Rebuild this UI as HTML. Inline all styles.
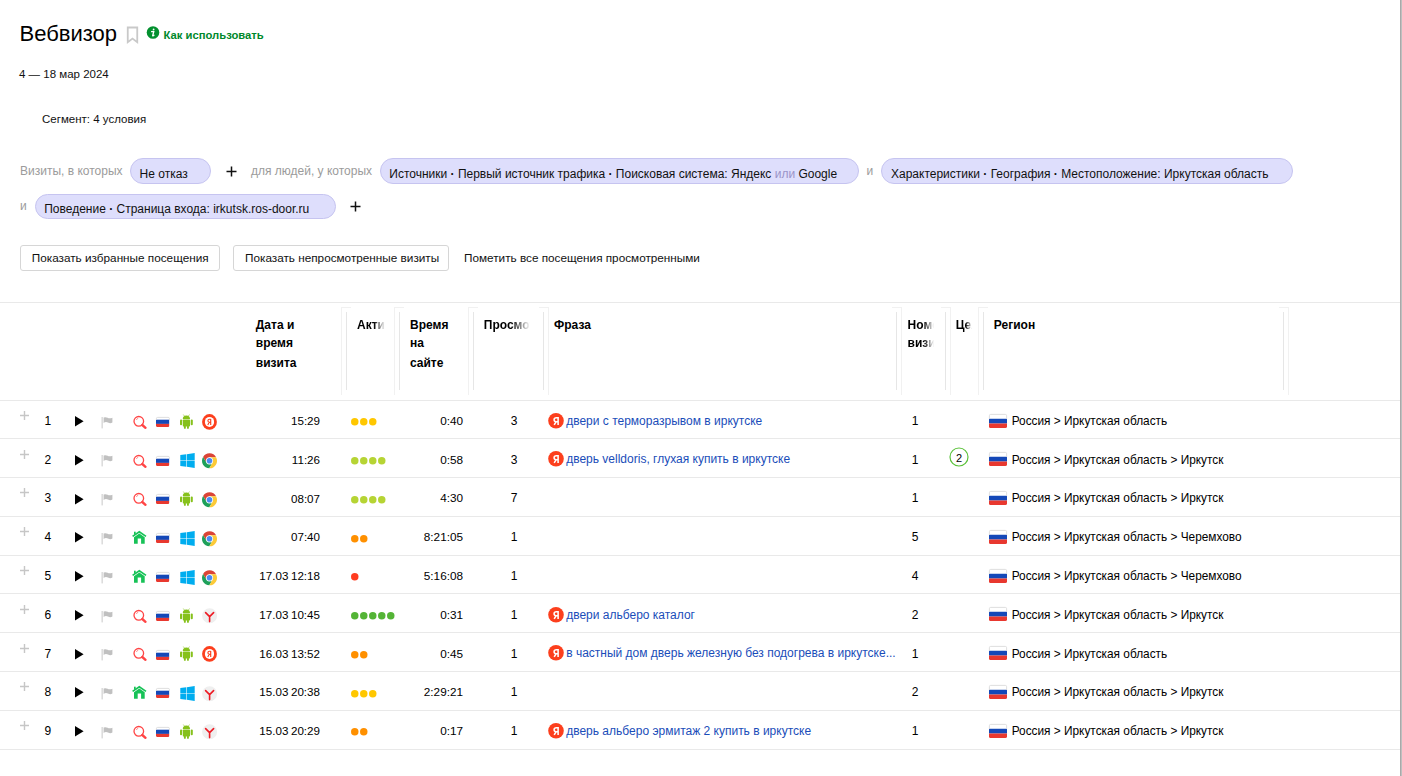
<!DOCTYPE html>
<html><head><meta charset="utf-8"><title>Вебвизор</title><style>
html,body{margin:0;padding:0;background:#fff}
body{width:1402px;height:776px;overflow:hidden;position:relative;font-family:"Liberation Sans",sans-serif}
.t{position:absolute;white-space:nowrap}
.i{position:absolute;overflow:visible}
.pill{position:absolute;box-sizing:border-box;background:#dedefc;border:1px solid #c6c4f0;border-radius:13px}
.btn{position:absolute;box-sizing:border-box;background:#fff;border:1px solid #d6d6d6;border-radius:3px}
.hl{position:absolute;left:0;width:1400px;height:1px;background:#e9e9e9}
.sl{position:absolute;width:1px;background:#f1f1f1}
.st{position:absolute;height:1px;background:#f1f1f1}
.sd{position:absolute;width:1px;background:#e6e6e6}
.bul{font-weight:bold}
</style></head><body>
<div class="t" style="left:19.5px;top:20.88px;font-size:22px;line-height:26px;font-weight:normal;color:#000;">Вебвизор</div>
<svg class="i" style="left:126px;top:26px" width="13" height="18" viewBox="0 0 13 18"><path d="M1.75 1.5H11.25V16.2L6.5 12.6L1.75 16.2Z" fill="none" stroke="#c9c9c9" stroke-width="1.8" stroke-linejoin="miter"/></svg>
<svg class="i" style="left:146px;top:26px" width="14" height="14" viewBox="0 0 14 14"><circle cx="7" cy="6.5" r="6.3" fill="#03902f"/><circle cx="7.6" cy="3.4" r="0.9" fill="#fff"/><path d="M5.6 5.7L7.9 5.3L6.7 9.4Q6.5 10.1 7.2 9.8L8 9.3" fill="none" stroke="#fff" stroke-width="1.3" stroke-linecap="round" stroke-linejoin="round"/></svg>
<div class="t" style="left:163.5px;top:27.80px;font-size:11.25px;line-height:14px;font-weight:bold;color:#00892b;">Как использовать</div>
<div class="t" style="left:19px;top:67.02px;font-size:11.5px;line-height:14px;font-weight:normal;color:#111;">4 — 18 мар 2024</div>
<div class="t" style="left:42px;top:112.02px;font-size:11.5px;line-height:14px;font-weight:normal;color:#111;">Сегмент: 4 условия</div>
<div class="t" style="left:20px;top:164.14px;font-size:12px;line-height:14px;font-weight:normal;color:#9b9b9b;">Визиты, в которых</div>
<div class="pill" style="left:129.6px;top:158.2px;width:81.9px;height:25.400000000000006px"></div><div class="t" style="left:139.6px;top:166.84px;font-size:12px;line-height:14px;font-weight:normal;color:#111;">Не отказ</div>
<svg class="i" style="left:226px;top:166px" width="11" height="11" viewBox="0 0 11 11"><path d="M5.5 0.5V10.5M0.5 5.5H10.5" stroke="#111" stroke-width="1.5"/></svg>
<div class="t" style="left:251px;top:164.14px;font-size:12px;line-height:14px;font-weight:normal;color:#9b9b9b;">для людей, у которых</div>
<div class="pill" style="left:379.5px;top:158.2px;width:479.5px;height:25.400000000000006px"></div><div class="t" style="left:389.3px;top:166.84px;font-size:12px;line-height:14px;font-weight:normal;color:#111;">Источники <b class="bul">·</b> Первый источник трафика <b class="bul">·</b> Поисковая система: Яндекс <span style="color:#9a94c8">или</span> Google</div>
<div class="t" style="left:866.5px;top:164.14px;font-size:12px;line-height:14px;font-weight:normal;color:#9b9b9b;">и</div>
<div class="pill" style="left:881.3px;top:158.2px;width:411.70000000000005px;height:25.400000000000006px"></div><div class="t" style="left:891px;top:166.84px;font-size:12px;line-height:14px;font-weight:normal;color:#111;">Характеристики <b class="bul">·</b> География <b class="bul">·</b> Местоположение: Иркутская область</div>
<div class="t" style="left:20px;top:199.14px;font-size:12px;line-height:14px;font-weight:normal;color:#9b9b9b;">и</div>
<div class="pill" style="left:34.5px;top:193.6px;width:301.7px;height:25.0px"></div><div class="t" style="left:44.2px;top:201.84px;font-size:12px;line-height:14px;font-weight:normal;color:#111;">Поведение <b class="bul">·</b> Страница входа: irkutsk.ros-door.ru</div>
<svg class="i" style="left:349.9px;top:200.9px" width="11" height="11" viewBox="0 0 11 11"><path d="M5.5 0.5V10.5M0.5 5.5H10.5" stroke="#111" stroke-width="1.5"/></svg>
<div class="btn" style="left:20px;top:245px;width:200px;height:26px"></div>
<div class="t" style="left:31.8px;top:250.73px;font-size:11.75px;line-height:14px;font-weight:normal;color:#111;">Показать избранные посещения</div>
<div class="btn" style="left:233px;top:245px;width:216px;height:26px"></div>
<div class="t" style="left:245px;top:250.73px;font-size:11.75px;line-height:14px;font-weight:normal;color:#111;">Показать непросмотренные визиты</div>
<div class="t" style="left:464px;top:250.73px;font-size:11.75px;line-height:14px;font-weight:normal;color:#111;">Пометить все посещения просмотренными</div>
<div class="hl" style="top:302px"></div>
<div class="hl" style="top:400px"></div>
<div class="t" style="left:255.8px;top:317.74px;font-size:12px;line-height:14px;font-weight:bold;color:#000;">Дата и</div><div class="t" style="left:255.8px;top:336.24px;font-size:12px;line-height:14px;font-weight:bold;color:#000;">время</div><div class="t" style="left:255.8px;top:355.64px;font-size:12px;line-height:14px;font-weight:bold;color:#000;">визита</div>
<div class="t" style="left:357px;top:317.74px;font-size:12px;line-height:14px;font-weight:bold;color:#000;width:28px;overflow:hidden;-webkit-mask-image:linear-gradient(90deg,#000 60%,transparent 100%);mask-image:linear-gradient(90deg,#000 60%,transparent 100%)">Активность</div>
<div class="t" style="left:410px;top:317.74px;font-size:12px;line-height:14px;font-weight:bold;color:#000;">Время</div><div class="t" style="left:410px;top:336.24px;font-size:12px;line-height:14px;font-weight:bold;color:#000;">на</div><div class="t" style="left:410px;top:355.64px;font-size:12px;line-height:14px;font-weight:bold;color:#000;">сайте</div>
<div class="t" style="left:483.8px;top:317.74px;font-size:12px;line-height:14px;font-weight:bold;color:#000;width:46px;overflow:hidden;-webkit-mask-image:linear-gradient(90deg,#000 60%,transparent 100%);mask-image:linear-gradient(90deg,#000 60%,transparent 100%)">Просмотры</div>
<div class="t" style="left:554px;top:317.74px;font-size:12px;line-height:14px;font-weight:bold;color:#000;">Фраза</div>
<div class="t" style="left:907.6px;top:317.74px;font-size:12px;line-height:14px;font-weight:bold;color:#000;width:26px;overflow:hidden;-webkit-mask-image:linear-gradient(90deg,#000 60%,transparent 100%);mask-image:linear-gradient(90deg,#000 60%,transparent 100%)">Номер</div><div class="t" style="left:907.6px;top:336.24px;font-size:12px;line-height:14px;font-weight:bold;color:#000;width:26px;overflow:hidden;-webkit-mask-image:linear-gradient(90deg,#000 60%,transparent 100%);mask-image:linear-gradient(90deg,#000 60%,transparent 100%)">визита</div>
<div class="t" style="left:955.7px;top:317.74px;font-size:12px;line-height:14px;font-weight:bold;color:#000;width:16px;overflow:hidden;-webkit-mask-image:linear-gradient(90deg,#000 60%,transparent 100%);mask-image:linear-gradient(90deg,#000 60%,transparent 100%)">Цели</div>
<div class="t" style="left:993.8px;top:317.74px;font-size:12px;line-height:14px;font-weight:bold;color:#000;">Регион</div>
<div class="sl" style="left:341px;top:307px;height:88px"></div><div class="st" style="left:341px;top:307px;width:10px"></div><div class="sd" style="left:346px;top:312px;height:78px"></div>
<div class="sl" style="left:394px;top:307px;height:88px"></div><div class="st" style="left:394px;top:307px;width:10px"></div><div class="sd" style="left:399px;top:312px;height:78px"></div>
<div class="sl" style="left:468px;top:307px;height:88px"></div><div class="st" style="left:468px;top:307px;width:10px"></div><div class="sd" style="left:473px;top:312px;height:78px"></div>
<div class="sl" style="left:978px;top:307px;height:88px"></div><div class="st" style="left:978px;top:307px;width:10px"></div><div class="sd" style="left:983px;top:312px;height:78px"></div>
<div class="sl" style="left:548px;top:307px;height:88px"></div><div class="st" style="left:539px;top:307px;width:10px"></div><div class="sd" style="left:543px;top:312px;height:78px"></div>
<div class="sl" style="left:901px;top:307px;height:88px"></div><div class="st" style="left:892px;top:307px;width:10px"></div><div class="sd" style="left:896px;top:312px;height:78px"></div>
<div class="sl" style="left:950px;top:307px;height:88px"></div><div class="st" style="left:941px;top:307px;width:10px"></div><div class="sd" style="left:945px;top:312px;height:78px"></div>
<div class="sl" style="left:1288px;top:307px;height:88px"></div><div class="st" style="left:1279px;top:307px;width:10px"></div><div class="sd" style="left:1283px;top:312px;height:78px"></div>
<div class="hl" style="top:438px"></div>
<div class="hl" style="top:477px"></div>
<div class="hl" style="top:516px"></div>
<div class="hl" style="top:555px"></div>
<div class="hl" style="top:593px"></div>
<div class="hl" style="top:632px"></div>
<div class="hl" style="top:671px"></div>
<div class="hl" style="top:710px"></div>
<div class="hl" style="top:749px"></div>
<svg class="i" style="left:20.1px;top:410.9px" width="9" height="9" viewBox="0 0 9 9"><path d="M4.5 0V9M0 4.5H9" stroke="#c6c6c6" stroke-width="1.4"/></svg>
<div class="t" style="left:44.5px;top:413.84px;font-size:12px;line-height:14px;font-weight:normal;color:#000;">1</div>
<svg class="i" style="left:75px;top:416.0px" width="9" height="11" viewBox="0 0 9 11"><path d="M0 0L8.6 5.2L0 10.4Z" fill="#000"/></svg>
<svg class="i" style="left:101px;top:416.6px" width="12" height="12" viewBox="0 0 12 12"><rect x="0.4" y="0" width="1.6" height="11.4" fill="#dcdcdc"/><path d="M2.6 0.6Q4.5 -0.3 6.6 0.8T11.4 0.7V5.6Q9.3 6.7 7 5.6T2.6 5.9Z" fill="#c0c0c0"/></svg>
<svg class="i" style="left:133px;top:415.8px" width="15" height="14" viewBox="0 0 15 14"><circle cx="5.8" cy="5.3" r="4.8" fill="none" stroke="#ff4545" stroke-width="1.3"/><path d="M3.3 3.9Q3.9 2.6 5.2 2.3" fill="none" stroke="#ff8080" stroke-width="0.9"/><path d="M9.3 9L12.5 11.8" stroke="#ff4545" stroke-width="2.4" stroke-linecap="round"/></svg>
<svg class="i" style="left:156px;top:416.9px" width="13.8" height="10" viewBox="0 0 13.8 10"><defs><clipPath id="c156416_913"><rect x="0" y="0" width="13.4" height="10" rx="1.6"/></clipPath></defs><g clip-path="url(#c156416_913)"><rect x="0" y="0" width="13.4" height="10" fill="#fff"/><rect x="0" y="2.70" width="13.4" height="4.20" fill="#1448b8"/><rect x="0" y="6.90" width="13.4" height="3.20" fill="#e8382f"/></g><path d="M0.4 3.00V1.6A1.2000000000000002 1.2000000000000002 0 0 1 1.6 0.4H12.200000000000001A1.2000000000000002 1.2000000000000002 0 0 1 13.4 1.6V3.00" fill="none" stroke="#d6d6d6" stroke-width="0.8"/></svg>
<svg class="i" style="left:180px;top:413.8px" width="13" height="15" viewBox="0 0 13 15"><path d="M3.3 0.5L4.5 2.2M9.5 0.5L8.3 2.2" stroke="#a8d45a" stroke-width="0.8"/><path d="M2.8 5A3.6 3.6 0 0 1 10 5Z" fill="#86c11b"/><rect x="2.8" y="5.6" width="7.2" height="6.9" rx="0.7" fill="#86c11b"/><rect x="0" y="5.5" width="2.1" height="5.8" rx="1" fill="#86c11b"/><rect x="10.7" y="5.5" width="2.1" height="5.8" rx="1" fill="#86c11b"/><rect x="3.9" y="11.5" width="1.9" height="3.3" rx="0.9" fill="#86c11b"/><rect x="7" y="11.5" width="1.9" height="3.3" rx="0.9" fill="#86c11b"/></svg>
<svg class="i" style="left:202px;top:413.8px" width="15" height="16" viewBox="0 0 15 16"><ellipse cx="7.5" cy="7.9" rx="7.4" ry="7.8" fill="#fc3f1d"/><ellipse cx="7.5" cy="7.9" rx="4.6" ry="5" fill="#fff"/><path d="M8.7 4.9V10.9M8.7 5.2H7.5Q5.9 5.2 5.9 6.8Q5.9 8.3 7.5 8.3H8.7M7.2 8.3L5.8 10.9" fill="none" stroke="#fc3f1d" stroke-width="1.15"/></svg>
<div class="t" style="right:1082px;top:413.98px;font-size:11.6px;line-height:14px;font-weight:normal;color:#000;word-spacing:-0.6px">15:29</div>
<svg class="i" style="left:351px;top:418.2px" width="46" height="8" viewBox="0 0 46 8"><circle cx="3.75" cy="3.8" r="3.75" fill="#ffc700"/><circle cx="12.75" cy="3.8" r="3.75" fill="#ffc700"/><circle cx="21.75" cy="3.8" r="3.75" fill="#ffc700"/></svg>
<div class="t" style="right:939px;top:413.93px;font-size:11.75px;line-height:14px;font-weight:normal;color:#000;">0:40</div>
<div class="t" style="right:884.5px;top:413.84px;font-size:12px;line-height:14px;font-weight:normal;color:#000;">3</div>
<svg class="i" style="left:548px;top:412.6px" width="16" height="16" viewBox="0 0 16 16"><circle cx="8" cy="7.8" r="7.8" fill="#fc3f1d"/><path d="M10.1 3.9V11.9M10.1 4.7H8.4Q6.1 4.7 6.1 6.8Q6.1 8.8 8.4 8.8H10.1M8 8.8L6.2 11.9" fill="none" stroke="#fff" stroke-width="1.55"/></svg>
<div class="t" style="left:566.2px;top:413.64px;font-size:12px;line-height:14px;font-weight:normal;color:#1a4db9;">двери с терморазрывом в иркутске</div>
<div class="t" style="right:483.5px;top:413.84px;font-size:12px;line-height:14px;font-weight:normal;color:#000;">1</div>
<svg class="i" style="left:989px;top:413.5px" width="18" height="14" viewBox="0 0 18 14"><defs><clipPath id="c989413_518"><rect x="0" y="0" width="18.0" height="14" rx="1.6"/></clipPath></defs><g clip-path="url(#c989413_518)"><rect x="0" y="0" width="18.0" height="14" fill="#fff"/><rect x="0" y="4.76" width="18.0" height="4.76" fill="#1448b8"/><rect x="0" y="9.52" width="18.0" height="4.58" fill="#e8382f"/></g><path d="M0.4 5.06V1.6A1.2000000000000002 1.2000000000000002 0 0 1 1.6 0.4H16.4A1.2000000000000002 1.2000000000000002 0 0 1 17.6 1.6V5.06" fill="none" stroke="#d6d6d6" stroke-width="0.8"/></svg>
<div class="t" style="left:1011.7px;top:413.89px;font-size:11.85px;line-height:14px;font-weight:normal;color:#000;">Россия &gt; Иркутская область</div>
<svg class="i" style="left:20.1px;top:449.68px" width="9" height="9" viewBox="0 0 9 9"><path d="M4.5 0V9M0 4.5H9" stroke="#c6c6c6" stroke-width="1.4"/></svg>
<div class="t" style="left:44.5px;top:452.62px;font-size:12px;line-height:14px;font-weight:normal;color:#000;">2</div>
<svg class="i" style="left:75px;top:454.78px" width="9" height="11" viewBox="0 0 9 11"><path d="M0 0L8.6 5.2L0 10.4Z" fill="#000"/></svg>
<svg class="i" style="left:101px;top:455.38px" width="12" height="12" viewBox="0 0 12 12"><rect x="0.4" y="0" width="1.6" height="11.4" fill="#dcdcdc"/><path d="M2.6 0.6Q4.5 -0.3 6.6 0.8T11.4 0.7V5.6Q9.3 6.7 7 5.6T2.6 5.9Z" fill="#c0c0c0"/></svg>
<svg class="i" style="left:133px;top:454.58px" width="15" height="14" viewBox="0 0 15 14"><circle cx="5.8" cy="5.3" r="4.8" fill="none" stroke="#ff4545" stroke-width="1.3"/><path d="M3.3 3.9Q3.9 2.6 5.2 2.3" fill="none" stroke="#ff8080" stroke-width="0.9"/><path d="M9.3 9L12.5 11.8" stroke="#ff4545" stroke-width="2.4" stroke-linecap="round"/></svg>
<svg class="i" style="left:156px;top:455.68px" width="13.8" height="10" viewBox="0 0 13.8 10"><defs><clipPath id="c156455_6813"><rect x="0" y="0" width="13.4" height="10" rx="1.6"/></clipPath></defs><g clip-path="url(#c156455_6813)"><rect x="0" y="0" width="13.4" height="10" fill="#fff"/><rect x="0" y="2.70" width="13.4" height="4.20" fill="#1448b8"/><rect x="0" y="6.90" width="13.4" height="3.20" fill="#e8382f"/></g><path d="M0.4 3.00V1.6A1.2000000000000002 1.2000000000000002 0 0 1 1.6 0.4H12.200000000000001A1.2000000000000002 1.2000000000000002 0 0 1 13.4 1.6V3.00" fill="none" stroke="#d6d6d6" stroke-width="0.8"/></svg>
<svg class="i" style="left:179.5px;top:453.38px" width="15" height="15" viewBox="0 0 15 15"><path d="M0.3 2.1L6.3 1.3V7.2H0.3Z M6.9 1.2L14.7 0V7.2H6.9Z M0.3 7.8H6.3V13.7L0.3 12.9Z M6.9 7.8H14.7V15L6.9 13.8Z" fill="#00adef"/></svg>
<svg class="i" style="left:202px;top:453.38px" width="15" height="16" viewBox="0 0 15 16"><path d="M7.500 4.200L14.080 4.200A7.5 7.5 0 0 0 1.093 3.902L4.382 9.600L7.5 7.8Z" fill="#db4437"/><path d="M4.382 9.600L1.093 3.902A7.5 7.5 0 0 0 7.328 15.298L10.618 9.600L7.5 7.8Z" fill="#1ea05a"/><path d="M10.618 9.600L7.328 15.298A7.5 7.5 0 0 0 14.080 4.200L7.500 4.200L7.5 7.8Z" fill="#fcca38"/><circle cx="7.5" cy="7.8" r="3.6" fill="#fff"/><circle cx="7.5" cy="7.8" r="2.8" fill="#4a8af4"/></svg>
<div class="t" style="right:1082px;top:452.76px;font-size:11.6px;line-height:14px;font-weight:normal;color:#000;word-spacing:-0.6px">11:26</div>
<svg class="i" style="left:351px;top:456.98px" width="46" height="8" viewBox="0 0 46 8"><circle cx="3.75" cy="3.8" r="3.75" fill="#b6d434"/><circle cx="12.75" cy="3.8" r="3.75" fill="#b6d434"/><circle cx="21.75" cy="3.8" r="3.75" fill="#b6d434"/><circle cx="30.75" cy="3.8" r="3.75" fill="#b6d434"/></svg>
<div class="t" style="right:939px;top:452.71px;font-size:11.75px;line-height:14px;font-weight:normal;color:#000;">0:58</div>
<div class="t" style="right:884.5px;top:452.62px;font-size:12px;line-height:14px;font-weight:normal;color:#000;">3</div>
<svg class="i" style="left:548px;top:451.38px" width="16" height="16" viewBox="0 0 16 16"><circle cx="8" cy="7.8" r="7.8" fill="#fc3f1d"/><path d="M10.1 3.9V11.9M10.1 4.7H8.4Q6.1 4.7 6.1 6.8Q6.1 8.8 8.4 8.8H10.1M8 8.8L6.2 11.9" fill="none" stroke="#fff" stroke-width="1.55"/></svg>
<div class="t" style="left:566.2px;top:452.42px;font-size:12px;line-height:14px;font-weight:normal;color:#1a4db9;">дверь velldoris, глухая купить в иркутске</div>
<div class="t" style="right:483.5px;top:452.62px;font-size:12px;line-height:14px;font-weight:normal;color:#000;">1</div>
<svg class="i" style="left:949.1px;top:446.78px" width="20" height="20" viewBox="0 0 20 20"><circle cx="10" cy="10" r="9" fill="none" stroke="#5bc23a" stroke-width="1.2"/><text x="10" y="15" text-anchor="middle" font-family="Liberation Sans" font-size="11" fill="#000">2</text></svg>
<svg class="i" style="left:989px;top:452.28px" width="18" height="14" viewBox="0 0 18 14"><defs><clipPath id="c989452_2818"><rect x="0" y="0" width="18.0" height="14" rx="1.6"/></clipPath></defs><g clip-path="url(#c989452_2818)"><rect x="0" y="0" width="18.0" height="14" fill="#fff"/><rect x="0" y="4.76" width="18.0" height="4.76" fill="#1448b8"/><rect x="0" y="9.52" width="18.0" height="4.58" fill="#e8382f"/></g><path d="M0.4 5.06V1.6A1.2000000000000002 1.2000000000000002 0 0 1 1.6 0.4H16.4A1.2000000000000002 1.2000000000000002 0 0 1 17.6 1.6V5.06" fill="none" stroke="#d6d6d6" stroke-width="0.8"/></svg>
<div class="t" style="left:1011.7px;top:452.67px;font-size:11.85px;line-height:14px;font-weight:normal;color:#000;">Россия &gt; Иркутская область &gt; Иркутск</div>
<svg class="i" style="left:20.1px;top:488.46px" width="9" height="9" viewBox="0 0 9 9"><path d="M4.5 0V9M0 4.5H9" stroke="#c6c6c6" stroke-width="1.4"/></svg>
<div class="t" style="left:44.5px;top:491.40px;font-size:12px;line-height:14px;font-weight:normal;color:#000;">3</div>
<svg class="i" style="left:75px;top:493.56px" width="9" height="11" viewBox="0 0 9 11"><path d="M0 0L8.6 5.2L0 10.4Z" fill="#000"/></svg>
<svg class="i" style="left:101px;top:494.16px" width="12" height="12" viewBox="0 0 12 12"><rect x="0.4" y="0" width="1.6" height="11.4" fill="#dcdcdc"/><path d="M2.6 0.6Q4.5 -0.3 6.6 0.8T11.4 0.7V5.6Q9.3 6.7 7 5.6T2.6 5.9Z" fill="#c0c0c0"/></svg>
<svg class="i" style="left:133px;top:493.36px" width="15" height="14" viewBox="0 0 15 14"><circle cx="5.8" cy="5.3" r="4.8" fill="none" stroke="#ff4545" stroke-width="1.3"/><path d="M3.3 3.9Q3.9 2.6 5.2 2.3" fill="none" stroke="#ff8080" stroke-width="0.9"/><path d="M9.3 9L12.5 11.8" stroke="#ff4545" stroke-width="2.4" stroke-linecap="round"/></svg>
<svg class="i" style="left:156px;top:494.46px" width="13.8" height="10" viewBox="0 0 13.8 10"><defs><clipPath id="c156494_4613"><rect x="0" y="0" width="13.4" height="10" rx="1.6"/></clipPath></defs><g clip-path="url(#c156494_4613)"><rect x="0" y="0" width="13.4" height="10" fill="#fff"/><rect x="0" y="2.70" width="13.4" height="4.20" fill="#1448b8"/><rect x="0" y="6.90" width="13.4" height="3.20" fill="#e8382f"/></g><path d="M0.4 3.00V1.6A1.2000000000000002 1.2000000000000002 0 0 1 1.6 0.4H12.200000000000001A1.2000000000000002 1.2000000000000002 0 0 1 13.4 1.6V3.00" fill="none" stroke="#d6d6d6" stroke-width="0.8"/></svg>
<svg class="i" style="left:180px;top:491.36px" width="13" height="15" viewBox="0 0 13 15"><path d="M3.3 0.5L4.5 2.2M9.5 0.5L8.3 2.2" stroke="#a8d45a" stroke-width="0.8"/><path d="M2.8 5A3.6 3.6 0 0 1 10 5Z" fill="#86c11b"/><rect x="2.8" y="5.6" width="7.2" height="6.9" rx="0.7" fill="#86c11b"/><rect x="0" y="5.5" width="2.1" height="5.8" rx="1" fill="#86c11b"/><rect x="10.7" y="5.5" width="2.1" height="5.8" rx="1" fill="#86c11b"/><rect x="3.9" y="11.5" width="1.9" height="3.3" rx="0.9" fill="#86c11b"/><rect x="7" y="11.5" width="1.9" height="3.3" rx="0.9" fill="#86c11b"/></svg>
<svg class="i" style="left:202px;top:492.16px" width="15" height="16" viewBox="0 0 15 16"><path d="M7.500 4.200L14.080 4.200A7.5 7.5 0 0 0 1.093 3.902L4.382 9.600L7.5 7.8Z" fill="#db4437"/><path d="M4.382 9.600L1.093 3.902A7.5 7.5 0 0 0 7.328 15.298L10.618 9.600L7.5 7.8Z" fill="#1ea05a"/><path d="M10.618 9.600L7.328 15.298A7.5 7.5 0 0 0 14.080 4.200L7.500 4.200L7.5 7.8Z" fill="#fcca38"/><circle cx="7.5" cy="7.8" r="3.6" fill="#fff"/><circle cx="7.5" cy="7.8" r="2.8" fill="#4a8af4"/></svg>
<div class="t" style="right:1082px;top:491.54px;font-size:11.6px;line-height:14px;font-weight:normal;color:#000;word-spacing:-0.6px">08:07</div>
<svg class="i" style="left:351px;top:495.76px" width="46" height="8" viewBox="0 0 46 8"><circle cx="3.75" cy="3.8" r="3.75" fill="#b6d434"/><circle cx="12.75" cy="3.8" r="3.75" fill="#b6d434"/><circle cx="21.75" cy="3.8" r="3.75" fill="#b6d434"/><circle cx="30.75" cy="3.8" r="3.75" fill="#b6d434"/></svg>
<div class="t" style="right:939px;top:491.49px;font-size:11.75px;line-height:14px;font-weight:normal;color:#000;">4:30</div>
<div class="t" style="right:884.5px;top:491.40px;font-size:12px;line-height:14px;font-weight:normal;color:#000;">7</div>
<div class="t" style="right:483.5px;top:491.40px;font-size:12px;line-height:14px;font-weight:normal;color:#000;">1</div>
<svg class="i" style="left:989px;top:491.06px" width="18" height="14" viewBox="0 0 18 14"><defs><clipPath id="c989491_0618"><rect x="0" y="0" width="18.0" height="14" rx="1.6"/></clipPath></defs><g clip-path="url(#c989491_0618)"><rect x="0" y="0" width="18.0" height="14" fill="#fff"/><rect x="0" y="4.76" width="18.0" height="4.76" fill="#1448b8"/><rect x="0" y="9.52" width="18.0" height="4.58" fill="#e8382f"/></g><path d="M0.4 5.06V1.6A1.2000000000000002 1.2000000000000002 0 0 1 1.6 0.4H16.4A1.2000000000000002 1.2000000000000002 0 0 1 17.6 1.6V5.06" fill="none" stroke="#d6d6d6" stroke-width="0.8"/></svg>
<div class="t" style="left:1011.7px;top:491.45px;font-size:11.85px;line-height:14px;font-weight:normal;color:#000;">Россия &gt; Иркутская область &gt; Иркутск</div>
<svg class="i" style="left:20.1px;top:527.24px" width="9" height="9" viewBox="0 0 9 9"><path d="M4.5 0V9M0 4.5H9" stroke="#c6c6c6" stroke-width="1.4"/></svg>
<div class="t" style="left:44.5px;top:530.18px;font-size:12px;line-height:14px;font-weight:normal;color:#000;">4</div>
<svg class="i" style="left:75px;top:532.34px" width="9" height="11" viewBox="0 0 9 11"><path d="M0 0L8.6 5.2L0 10.4Z" fill="#000"/></svg>
<svg class="i" style="left:101px;top:532.94px" width="12" height="12" viewBox="0 0 12 12"><rect x="0.4" y="0" width="1.6" height="11.4" fill="#dcdcdc"/><path d="M2.6 0.6Q4.5 -0.3 6.6 0.8T11.4 0.7V5.6Q9.3 6.7 7 5.6T2.6 5.9Z" fill="#c0c0c0"/></svg>
<svg class="i" style="left:132px;top:530.74px" width="15" height="13" viewBox="0 0 15 13"><path d="M0.6 5.4L7.3 0.8L14 5.4" fill="none" stroke="#17c257" stroke-width="1.7"/><rect x="2" y="0.7" width="1.7" height="3" fill="#17c257"/><path d="M2 6.2L7.3 2.6L12.7 6.2V12.8H9.1V7.4H5.7V12.8H2Z" fill="#17c257"/></svg>
<svg class="i" style="left:156px;top:533.24px" width="13.8" height="10" viewBox="0 0 13.8 10"><defs><clipPath id="c156533_2413"><rect x="0" y="0" width="13.4" height="10" rx="1.6"/></clipPath></defs><g clip-path="url(#c156533_2413)"><rect x="0" y="0" width="13.4" height="10" fill="#fff"/><rect x="0" y="2.70" width="13.4" height="4.20" fill="#1448b8"/><rect x="0" y="6.90" width="13.4" height="3.20" fill="#e8382f"/></g><path d="M0.4 3.00V1.6A1.2000000000000002 1.2000000000000002 0 0 1 1.6 0.4H12.200000000000001A1.2000000000000002 1.2000000000000002 0 0 1 13.4 1.6V3.00" fill="none" stroke="#d6d6d6" stroke-width="0.8"/></svg>
<svg class="i" style="left:179.5px;top:530.94px" width="15" height="15" viewBox="0 0 15 15"><path d="M0.3 2.1L6.3 1.3V7.2H0.3Z M6.9 1.2L14.7 0V7.2H6.9Z M0.3 7.8H6.3V13.7L0.3 12.9Z M6.9 7.8H14.7V15L6.9 13.8Z" fill="#00adef"/></svg>
<svg class="i" style="left:202px;top:530.94px" width="15" height="16" viewBox="0 0 15 16"><path d="M7.500 4.200L14.080 4.200A7.5 7.5 0 0 0 1.093 3.902L4.382 9.600L7.5 7.8Z" fill="#db4437"/><path d="M4.382 9.600L1.093 3.902A7.5 7.5 0 0 0 7.328 15.298L10.618 9.600L7.5 7.8Z" fill="#1ea05a"/><path d="M10.618 9.600L7.328 15.298A7.5 7.5 0 0 0 14.080 4.200L7.500 4.200L7.5 7.8Z" fill="#fcca38"/><circle cx="7.5" cy="7.8" r="3.6" fill="#fff"/><circle cx="7.5" cy="7.8" r="2.8" fill="#4a8af4"/></svg>
<div class="t" style="right:1082px;top:530.32px;font-size:11.6px;line-height:14px;font-weight:normal;color:#000;word-spacing:-0.6px">07:40</div>
<svg class="i" style="left:351px;top:534.54px" width="46" height="8" viewBox="0 0 46 8"><circle cx="3.75" cy="3.8" r="3.75" fill="#ff9000"/><circle cx="12.75" cy="3.8" r="3.75" fill="#ff9000"/></svg>
<div class="t" style="right:939px;top:530.27px;font-size:11.75px;line-height:14px;font-weight:normal;color:#000;">8:21:05</div>
<div class="t" style="right:884.5px;top:530.18px;font-size:12px;line-height:14px;font-weight:normal;color:#000;">1</div>
<div class="t" style="right:483.5px;top:530.18px;font-size:12px;line-height:14px;font-weight:normal;color:#000;">5</div>
<svg class="i" style="left:989px;top:529.84px" width="18" height="14" viewBox="0 0 18 14"><defs><clipPath id="c989529_8418"><rect x="0" y="0" width="18.0" height="14" rx="1.6"/></clipPath></defs><g clip-path="url(#c989529_8418)"><rect x="0" y="0" width="18.0" height="14" fill="#fff"/><rect x="0" y="4.76" width="18.0" height="4.76" fill="#1448b8"/><rect x="0" y="9.52" width="18.0" height="4.58" fill="#e8382f"/></g><path d="M0.4 5.06V1.6A1.2000000000000002 1.2000000000000002 0 0 1 1.6 0.4H16.4A1.2000000000000002 1.2000000000000002 0 0 1 17.6 1.6V5.06" fill="none" stroke="#d6d6d6" stroke-width="0.8"/></svg>
<div class="t" style="left:1011.7px;top:530.23px;font-size:11.85px;line-height:14px;font-weight:normal;color:#000;">Россия &gt; Иркутская область &gt; Черемхово</div>
<svg class="i" style="left:20.1px;top:566.02px" width="9" height="9" viewBox="0 0 9 9"><path d="M4.5 0V9M0 4.5H9" stroke="#c6c6c6" stroke-width="1.4"/></svg>
<div class="t" style="left:44.5px;top:568.96px;font-size:12px;line-height:14px;font-weight:normal;color:#000;">5</div>
<svg class="i" style="left:75px;top:571.12px" width="9" height="11" viewBox="0 0 9 11"><path d="M0 0L8.6 5.2L0 10.4Z" fill="#000"/></svg>
<svg class="i" style="left:101px;top:571.72px" width="12" height="12" viewBox="0 0 12 12"><rect x="0.4" y="0" width="1.6" height="11.4" fill="#dcdcdc"/><path d="M2.6 0.6Q4.5 -0.3 6.6 0.8T11.4 0.7V5.6Q9.3 6.7 7 5.6T2.6 5.9Z" fill="#c0c0c0"/></svg>
<svg class="i" style="left:132px;top:569.52px" width="15" height="13" viewBox="0 0 15 13"><path d="M0.6 5.4L7.3 0.8L14 5.4" fill="none" stroke="#17c257" stroke-width="1.7"/><rect x="2" y="0.7" width="1.7" height="3" fill="#17c257"/><path d="M2 6.2L7.3 2.6L12.7 6.2V12.8H9.1V7.4H5.7V12.8H2Z" fill="#17c257"/></svg>
<svg class="i" style="left:156px;top:572.02px" width="13.8" height="10" viewBox="0 0 13.8 10"><defs><clipPath id="c156572_0213"><rect x="0" y="0" width="13.4" height="10" rx="1.6"/></clipPath></defs><g clip-path="url(#c156572_0213)"><rect x="0" y="0" width="13.4" height="10" fill="#fff"/><rect x="0" y="2.70" width="13.4" height="4.20" fill="#1448b8"/><rect x="0" y="6.90" width="13.4" height="3.20" fill="#e8382f"/></g><path d="M0.4 3.00V1.6A1.2000000000000002 1.2000000000000002 0 0 1 1.6 0.4H12.200000000000001A1.2000000000000002 1.2000000000000002 0 0 1 13.4 1.6V3.00" fill="none" stroke="#d6d6d6" stroke-width="0.8"/></svg>
<svg class="i" style="left:179.5px;top:569.72px" width="15" height="15" viewBox="0 0 15 15"><path d="M0.3 2.1L6.3 1.3V7.2H0.3Z M6.9 1.2L14.7 0V7.2H6.9Z M0.3 7.8H6.3V13.7L0.3 12.9Z M6.9 7.8H14.7V15L6.9 13.8Z" fill="#00adef"/></svg>
<svg class="i" style="left:202px;top:569.72px" width="15" height="16" viewBox="0 0 15 16"><path d="M7.500 4.200L14.080 4.200A7.5 7.5 0 0 0 1.093 3.902L4.382 9.600L7.5 7.8Z" fill="#db4437"/><path d="M4.382 9.600L1.093 3.902A7.5 7.5 0 0 0 7.328 15.298L10.618 9.600L7.5 7.8Z" fill="#1ea05a"/><path d="M10.618 9.600L7.328 15.298A7.5 7.5 0 0 0 14.080 4.200L7.500 4.200L7.5 7.8Z" fill="#fcca38"/><circle cx="7.5" cy="7.8" r="3.6" fill="#fff"/><circle cx="7.5" cy="7.8" r="2.8" fill="#4a8af4"/></svg>
<div class="t" style="right:1082px;top:569.10px;font-size:11.6px;line-height:14px;font-weight:normal;color:#000;word-spacing:-0.6px">17.03 12:18</div>
<svg class="i" style="left:351px;top:573.32px" width="46" height="8" viewBox="0 0 46 8"><circle cx="3.75" cy="3.8" r="3.75" fill="#ff3c20"/></svg>
<div class="t" style="right:939px;top:569.05px;font-size:11.75px;line-height:14px;font-weight:normal;color:#000;">5:16:08</div>
<div class="t" style="right:884.5px;top:568.96px;font-size:12px;line-height:14px;font-weight:normal;color:#000;">1</div>
<div class="t" style="right:483.5px;top:568.96px;font-size:12px;line-height:14px;font-weight:normal;color:#000;">4</div>
<svg class="i" style="left:989px;top:568.62px" width="18" height="14" viewBox="0 0 18 14"><defs><clipPath id="c989568_6218"><rect x="0" y="0" width="18.0" height="14" rx="1.6"/></clipPath></defs><g clip-path="url(#c989568_6218)"><rect x="0" y="0" width="18.0" height="14" fill="#fff"/><rect x="0" y="4.76" width="18.0" height="4.76" fill="#1448b8"/><rect x="0" y="9.52" width="18.0" height="4.58" fill="#e8382f"/></g><path d="M0.4 5.06V1.6A1.2000000000000002 1.2000000000000002 0 0 1 1.6 0.4H16.4A1.2000000000000002 1.2000000000000002 0 0 1 17.6 1.6V5.06" fill="none" stroke="#d6d6d6" stroke-width="0.8"/></svg>
<div class="t" style="left:1011.7px;top:569.01px;font-size:11.85px;line-height:14px;font-weight:normal;color:#000;">Россия &gt; Иркутская область &gt; Черемхово</div>
<svg class="i" style="left:20.1px;top:604.8px" width="9" height="9" viewBox="0 0 9 9"><path d="M4.5 0V9M0 4.5H9" stroke="#c6c6c6" stroke-width="1.4"/></svg>
<div class="t" style="left:44.5px;top:607.74px;font-size:12px;line-height:14px;font-weight:normal;color:#000;">6</div>
<svg class="i" style="left:75px;top:609.9px" width="9" height="11" viewBox="0 0 9 11"><path d="M0 0L8.6 5.2L0 10.4Z" fill="#000"/></svg>
<svg class="i" style="left:101px;top:610.5px" width="12" height="12" viewBox="0 0 12 12"><rect x="0.4" y="0" width="1.6" height="11.4" fill="#dcdcdc"/><path d="M2.6 0.6Q4.5 -0.3 6.6 0.8T11.4 0.7V5.6Q9.3 6.7 7 5.6T2.6 5.9Z" fill="#c0c0c0"/></svg>
<svg class="i" style="left:133px;top:609.7px" width="15" height="14" viewBox="0 0 15 14"><circle cx="5.8" cy="5.3" r="4.8" fill="none" stroke="#ff4545" stroke-width="1.3"/><path d="M3.3 3.9Q3.9 2.6 5.2 2.3" fill="none" stroke="#ff8080" stroke-width="0.9"/><path d="M9.3 9L12.5 11.8" stroke="#ff4545" stroke-width="2.4" stroke-linecap="round"/></svg>
<svg class="i" style="left:156px;top:610.8px" width="13.8" height="10" viewBox="0 0 13.8 10"><defs><clipPath id="c156610_813"><rect x="0" y="0" width="13.4" height="10" rx="1.6"/></clipPath></defs><g clip-path="url(#c156610_813)"><rect x="0" y="0" width="13.4" height="10" fill="#fff"/><rect x="0" y="2.70" width="13.4" height="4.20" fill="#1448b8"/><rect x="0" y="6.90" width="13.4" height="3.20" fill="#e8382f"/></g><path d="M0.4 3.00V1.6A1.2000000000000002 1.2000000000000002 0 0 1 1.6 0.4H12.200000000000001A1.2000000000000002 1.2000000000000002 0 0 1 13.4 1.6V3.00" fill="none" stroke="#d6d6d6" stroke-width="0.8"/></svg>
<svg class="i" style="left:180px;top:607.7px" width="13" height="15" viewBox="0 0 13 15"><path d="M3.3 0.5L4.5 2.2M9.5 0.5L8.3 2.2" stroke="#a8d45a" stroke-width="0.8"/><path d="M2.8 5A3.6 3.6 0 0 1 10 5Z" fill="#86c11b"/><rect x="2.8" y="5.6" width="7.2" height="6.9" rx="0.7" fill="#86c11b"/><rect x="0" y="5.5" width="2.1" height="5.8" rx="1" fill="#86c11b"/><rect x="10.7" y="5.5" width="2.1" height="5.8" rx="1" fill="#86c11b"/><rect x="3.9" y="11.5" width="1.9" height="3.3" rx="0.9" fill="#86c11b"/><rect x="7" y="11.5" width="1.9" height="3.3" rx="0.9" fill="#86c11b"/></svg>
<svg class="i" style="left:201.6px;top:608.1px" width="16" height="16" viewBox="0 0 16 16"><circle cx="7.6" cy="7.8" r="7.5" fill="#efefef"/><path d="M3.6 4.6L7.6 8.6L11.6 4.6M7.6 8.6V13.6" fill="none" stroke="#ee1b24" stroke-width="1.6" stroke-linecap="round" stroke-linejoin="round"/></svg>
<div class="t" style="right:1082px;top:607.88px;font-size:11.6px;line-height:14px;font-weight:normal;color:#000;word-spacing:-0.6px">17.03 10:45</div>
<svg class="i" style="left:351px;top:612.1px" width="46" height="8" viewBox="0 0 46 8"><circle cx="3.75" cy="3.8" r="3.75" fill="#54b436"/><circle cx="12.75" cy="3.8" r="3.75" fill="#54b436"/><circle cx="21.75" cy="3.8" r="3.75" fill="#54b436"/><circle cx="30.75" cy="3.8" r="3.75" fill="#54b436"/><circle cx="39.75" cy="3.8" r="3.75" fill="#54b436"/></svg>
<div class="t" style="right:939px;top:607.83px;font-size:11.75px;line-height:14px;font-weight:normal;color:#000;">0:31</div>
<div class="t" style="right:884.5px;top:607.74px;font-size:12px;line-height:14px;font-weight:normal;color:#000;">1</div>
<svg class="i" style="left:548px;top:606.5px" width="16" height="16" viewBox="0 0 16 16"><circle cx="8" cy="7.8" r="7.8" fill="#fc3f1d"/><path d="M10.1 3.9V11.9M10.1 4.7H8.4Q6.1 4.7 6.1 6.8Q6.1 8.8 8.4 8.8H10.1M8 8.8L6.2 11.9" fill="none" stroke="#fff" stroke-width="1.55"/></svg>
<div class="t" style="left:566.2px;top:607.54px;font-size:12px;line-height:14px;font-weight:normal;color:#1a4db9;">двери альберо каталог</div>
<div class="t" style="right:483.5px;top:607.74px;font-size:12px;line-height:14px;font-weight:normal;color:#000;">2</div>
<svg class="i" style="left:989px;top:607.4px" width="18" height="14" viewBox="0 0 18 14"><defs><clipPath id="c989607_418"><rect x="0" y="0" width="18.0" height="14" rx="1.6"/></clipPath></defs><g clip-path="url(#c989607_418)"><rect x="0" y="0" width="18.0" height="14" fill="#fff"/><rect x="0" y="4.76" width="18.0" height="4.76" fill="#1448b8"/><rect x="0" y="9.52" width="18.0" height="4.58" fill="#e8382f"/></g><path d="M0.4 5.06V1.6A1.2000000000000002 1.2000000000000002 0 0 1 1.6 0.4H16.4A1.2000000000000002 1.2000000000000002 0 0 1 17.6 1.6V5.06" fill="none" stroke="#d6d6d6" stroke-width="0.8"/></svg>
<div class="t" style="left:1011.7px;top:607.79px;font-size:11.85px;line-height:14px;font-weight:normal;color:#000;">Россия &gt; Иркутская область &gt; Иркутск</div>
<svg class="i" style="left:20.1px;top:643.58px" width="9" height="9" viewBox="0 0 9 9"><path d="M4.5 0V9M0 4.5H9" stroke="#c6c6c6" stroke-width="1.4"/></svg>
<div class="t" style="left:44.5px;top:646.52px;font-size:12px;line-height:14px;font-weight:normal;color:#000;">7</div>
<svg class="i" style="left:75px;top:648.68px" width="9" height="11" viewBox="0 0 9 11"><path d="M0 0L8.6 5.2L0 10.4Z" fill="#000"/></svg>
<svg class="i" style="left:101px;top:649.28px" width="12" height="12" viewBox="0 0 12 12"><rect x="0.4" y="0" width="1.6" height="11.4" fill="#dcdcdc"/><path d="M2.6 0.6Q4.5 -0.3 6.6 0.8T11.4 0.7V5.6Q9.3 6.7 7 5.6T2.6 5.9Z" fill="#c0c0c0"/></svg>
<svg class="i" style="left:133px;top:648.48px" width="15" height="14" viewBox="0 0 15 14"><circle cx="5.8" cy="5.3" r="4.8" fill="none" stroke="#ff4545" stroke-width="1.3"/><path d="M3.3 3.9Q3.9 2.6 5.2 2.3" fill="none" stroke="#ff8080" stroke-width="0.9"/><path d="M9.3 9L12.5 11.8" stroke="#ff4545" stroke-width="2.4" stroke-linecap="round"/></svg>
<svg class="i" style="left:156px;top:649.58px" width="13.8" height="10" viewBox="0 0 13.8 10"><defs><clipPath id="c156649_5813"><rect x="0" y="0" width="13.4" height="10" rx="1.6"/></clipPath></defs><g clip-path="url(#c156649_5813)"><rect x="0" y="0" width="13.4" height="10" fill="#fff"/><rect x="0" y="2.70" width="13.4" height="4.20" fill="#1448b8"/><rect x="0" y="6.90" width="13.4" height="3.20" fill="#e8382f"/></g><path d="M0.4 3.00V1.6A1.2000000000000002 1.2000000000000002 0 0 1 1.6 0.4H12.200000000000001A1.2000000000000002 1.2000000000000002 0 0 1 13.4 1.6V3.00" fill="none" stroke="#d6d6d6" stroke-width="0.8"/></svg>
<svg class="i" style="left:180px;top:646.48px" width="13" height="15" viewBox="0 0 13 15"><path d="M3.3 0.5L4.5 2.2M9.5 0.5L8.3 2.2" stroke="#a8d45a" stroke-width="0.8"/><path d="M2.8 5A3.6 3.6 0 0 1 10 5Z" fill="#86c11b"/><rect x="2.8" y="5.6" width="7.2" height="6.9" rx="0.7" fill="#86c11b"/><rect x="0" y="5.5" width="2.1" height="5.8" rx="1" fill="#86c11b"/><rect x="10.7" y="5.5" width="2.1" height="5.8" rx="1" fill="#86c11b"/><rect x="3.9" y="11.5" width="1.9" height="3.3" rx="0.9" fill="#86c11b"/><rect x="7" y="11.5" width="1.9" height="3.3" rx="0.9" fill="#86c11b"/></svg>
<svg class="i" style="left:202px;top:646.48px" width="15" height="16" viewBox="0 0 15 16"><ellipse cx="7.5" cy="7.9" rx="7.4" ry="7.8" fill="#fc3f1d"/><ellipse cx="7.5" cy="7.9" rx="4.6" ry="5" fill="#fff"/><path d="M8.7 4.9V10.9M8.7 5.2H7.5Q5.9 5.2 5.9 6.8Q5.9 8.3 7.5 8.3H8.7M7.2 8.3L5.8 10.9" fill="none" stroke="#fc3f1d" stroke-width="1.15"/></svg>
<div class="t" style="right:1082px;top:646.66px;font-size:11.6px;line-height:14px;font-weight:normal;color:#000;word-spacing:-0.6px">16.03 13:52</div>
<svg class="i" style="left:351px;top:650.88px" width="46" height="8" viewBox="0 0 46 8"><circle cx="3.75" cy="3.8" r="3.75" fill="#ff9000"/><circle cx="12.75" cy="3.8" r="3.75" fill="#ff9000"/></svg>
<div class="t" style="right:939px;top:646.61px;font-size:11.75px;line-height:14px;font-weight:normal;color:#000;">0:45</div>
<div class="t" style="right:884.5px;top:646.52px;font-size:12px;line-height:14px;font-weight:normal;color:#000;">1</div>
<svg class="i" style="left:548px;top:645.28px" width="16" height="16" viewBox="0 0 16 16"><circle cx="8" cy="7.8" r="7.8" fill="#fc3f1d"/><path d="M10.1 3.9V11.9M10.1 4.7H8.4Q6.1 4.7 6.1 6.8Q6.1 8.8 8.4 8.8H10.1M8 8.8L6.2 11.9" fill="none" stroke="#fff" stroke-width="1.55"/></svg>
<div class="t" style="left:566.2px;top:646.32px;font-size:12px;line-height:14px;font-weight:normal;color:#1a4db9;">в частный дом дверь железную без подогрева в иркутске...</div>
<div class="t" style="right:483.5px;top:646.52px;font-size:12px;line-height:14px;font-weight:normal;color:#000;">1</div>
<svg class="i" style="left:989px;top:646.18px" width="18" height="14" viewBox="0 0 18 14"><defs><clipPath id="c989646_1818"><rect x="0" y="0" width="18.0" height="14" rx="1.6"/></clipPath></defs><g clip-path="url(#c989646_1818)"><rect x="0" y="0" width="18.0" height="14" fill="#fff"/><rect x="0" y="4.76" width="18.0" height="4.76" fill="#1448b8"/><rect x="0" y="9.52" width="18.0" height="4.58" fill="#e8382f"/></g><path d="M0.4 5.06V1.6A1.2000000000000002 1.2000000000000002 0 0 1 1.6 0.4H16.4A1.2000000000000002 1.2000000000000002 0 0 1 17.6 1.6V5.06" fill="none" stroke="#d6d6d6" stroke-width="0.8"/></svg>
<div class="t" style="left:1011.7px;top:646.57px;font-size:11.85px;line-height:14px;font-weight:normal;color:#000;">Россия &gt; Иркутская область</div>
<svg class="i" style="left:20.1px;top:682.36px" width="9" height="9" viewBox="0 0 9 9"><path d="M4.5 0V9M0 4.5H9" stroke="#c6c6c6" stroke-width="1.4"/></svg>
<div class="t" style="left:44.5px;top:685.30px;font-size:12px;line-height:14px;font-weight:normal;color:#000;">8</div>
<svg class="i" style="left:75px;top:687.46px" width="9" height="11" viewBox="0 0 9 11"><path d="M0 0L8.6 5.2L0 10.4Z" fill="#000"/></svg>
<svg class="i" style="left:101px;top:688.06px" width="12" height="12" viewBox="0 0 12 12"><rect x="0.4" y="0" width="1.6" height="11.4" fill="#dcdcdc"/><path d="M2.6 0.6Q4.5 -0.3 6.6 0.8T11.4 0.7V5.6Q9.3 6.7 7 5.6T2.6 5.9Z" fill="#c0c0c0"/></svg>
<svg class="i" style="left:132px;top:685.86px" width="15" height="13" viewBox="0 0 15 13"><path d="M0.6 5.4L7.3 0.8L14 5.4" fill="none" stroke="#17c257" stroke-width="1.7"/><rect x="2" y="0.7" width="1.7" height="3" fill="#17c257"/><path d="M2 6.2L7.3 2.6L12.7 6.2V12.8H9.1V7.4H5.7V12.8H2Z" fill="#17c257"/></svg>
<svg class="i" style="left:156px;top:688.36px" width="13.8" height="10" viewBox="0 0 13.8 10"><defs><clipPath id="c156688_3613"><rect x="0" y="0" width="13.4" height="10" rx="1.6"/></clipPath></defs><g clip-path="url(#c156688_3613)"><rect x="0" y="0" width="13.4" height="10" fill="#fff"/><rect x="0" y="2.70" width="13.4" height="4.20" fill="#1448b8"/><rect x="0" y="6.90" width="13.4" height="3.20" fill="#e8382f"/></g><path d="M0.4 3.00V1.6A1.2000000000000002 1.2000000000000002 0 0 1 1.6 0.4H12.200000000000001A1.2000000000000002 1.2000000000000002 0 0 1 13.4 1.6V3.00" fill="none" stroke="#d6d6d6" stroke-width="0.8"/></svg>
<svg class="i" style="left:179.5px;top:686.06px" width="15" height="15" viewBox="0 0 15 15"><path d="M0.3 2.1L6.3 1.3V7.2H0.3Z M6.9 1.2L14.7 0V7.2H6.9Z M0.3 7.8H6.3V13.7L0.3 12.9Z M6.9 7.8H14.7V15L6.9 13.8Z" fill="#00adef"/></svg>
<svg class="i" style="left:201.6px;top:685.66px" width="16" height="16" viewBox="0 0 16 16"><circle cx="7.6" cy="7.8" r="7.5" fill="#efefef"/><path d="M3.6 4.6L7.6 8.6L11.6 4.6M7.6 8.6V13.6" fill="none" stroke="#ee1b24" stroke-width="1.6" stroke-linecap="round" stroke-linejoin="round"/></svg>
<div class="t" style="right:1082px;top:685.44px;font-size:11.6px;line-height:14px;font-weight:normal;color:#000;word-spacing:-0.6px">15.03 20:38</div>
<svg class="i" style="left:351px;top:689.66px" width="46" height="8" viewBox="0 0 46 8"><circle cx="3.75" cy="3.8" r="3.75" fill="#ffc700"/><circle cx="12.75" cy="3.8" r="3.75" fill="#ffc700"/><circle cx="21.75" cy="3.8" r="3.75" fill="#ffc700"/></svg>
<div class="t" style="right:939px;top:685.39px;font-size:11.75px;line-height:14px;font-weight:normal;color:#000;">2:29:21</div>
<div class="t" style="right:884.5px;top:685.30px;font-size:12px;line-height:14px;font-weight:normal;color:#000;">1</div>
<div class="t" style="right:483.5px;top:685.30px;font-size:12px;line-height:14px;font-weight:normal;color:#000;">2</div>
<svg class="i" style="left:989px;top:684.96px" width="18" height="14" viewBox="0 0 18 14"><defs><clipPath id="c989684_9618"><rect x="0" y="0" width="18.0" height="14" rx="1.6"/></clipPath></defs><g clip-path="url(#c989684_9618)"><rect x="0" y="0" width="18.0" height="14" fill="#fff"/><rect x="0" y="4.76" width="18.0" height="4.76" fill="#1448b8"/><rect x="0" y="9.52" width="18.0" height="4.58" fill="#e8382f"/></g><path d="M0.4 5.06V1.6A1.2000000000000002 1.2000000000000002 0 0 1 1.6 0.4H16.4A1.2000000000000002 1.2000000000000002 0 0 1 17.6 1.6V5.06" fill="none" stroke="#d6d6d6" stroke-width="0.8"/></svg>
<div class="t" style="left:1011.7px;top:685.35px;font-size:11.85px;line-height:14px;font-weight:normal;color:#000;">Россия &gt; Иркутская область &gt; Иркутск</div>
<svg class="i" style="left:20.1px;top:721.14px" width="9" height="9" viewBox="0 0 9 9"><path d="M4.5 0V9M0 4.5H9" stroke="#c6c6c6" stroke-width="1.4"/></svg>
<div class="t" style="left:44.5px;top:724.08px;font-size:12px;line-height:14px;font-weight:normal;color:#000;">9</div>
<svg class="i" style="left:75px;top:726.24px" width="9" height="11" viewBox="0 0 9 11"><path d="M0 0L8.6 5.2L0 10.4Z" fill="#000"/></svg>
<svg class="i" style="left:101px;top:726.84px" width="12" height="12" viewBox="0 0 12 12"><rect x="0.4" y="0" width="1.6" height="11.4" fill="#dcdcdc"/><path d="M2.6 0.6Q4.5 -0.3 6.6 0.8T11.4 0.7V5.6Q9.3 6.7 7 5.6T2.6 5.9Z" fill="#c0c0c0"/></svg>
<svg class="i" style="left:133px;top:726.04px" width="15" height="14" viewBox="0 0 15 14"><circle cx="5.8" cy="5.3" r="4.8" fill="none" stroke="#ff4545" stroke-width="1.3"/><path d="M3.3 3.9Q3.9 2.6 5.2 2.3" fill="none" stroke="#ff8080" stroke-width="0.9"/><path d="M9.3 9L12.5 11.8" stroke="#ff4545" stroke-width="2.4" stroke-linecap="round"/></svg>
<svg class="i" style="left:156px;top:727.14px" width="13.8" height="10" viewBox="0 0 13.8 10"><defs><clipPath id="c156727_1413"><rect x="0" y="0" width="13.4" height="10" rx="1.6"/></clipPath></defs><g clip-path="url(#c156727_1413)"><rect x="0" y="0" width="13.4" height="10" fill="#fff"/><rect x="0" y="2.70" width="13.4" height="4.20" fill="#1448b8"/><rect x="0" y="6.90" width="13.4" height="3.20" fill="#e8382f"/></g><path d="M0.4 3.00V1.6A1.2000000000000002 1.2000000000000002 0 0 1 1.6 0.4H12.200000000000001A1.2000000000000002 1.2000000000000002 0 0 1 13.4 1.6V3.00" fill="none" stroke="#d6d6d6" stroke-width="0.8"/></svg>
<svg class="i" style="left:180px;top:724.04px" width="13" height="15" viewBox="0 0 13 15"><path d="M3.3 0.5L4.5 2.2M9.5 0.5L8.3 2.2" stroke="#a8d45a" stroke-width="0.8"/><path d="M2.8 5A3.6 3.6 0 0 1 10 5Z" fill="#86c11b"/><rect x="2.8" y="5.6" width="7.2" height="6.9" rx="0.7" fill="#86c11b"/><rect x="0" y="5.5" width="2.1" height="5.8" rx="1" fill="#86c11b"/><rect x="10.7" y="5.5" width="2.1" height="5.8" rx="1" fill="#86c11b"/><rect x="3.9" y="11.5" width="1.9" height="3.3" rx="0.9" fill="#86c11b"/><rect x="7" y="11.5" width="1.9" height="3.3" rx="0.9" fill="#86c11b"/></svg>
<svg class="i" style="left:201.6px;top:724.44px" width="16" height="16" viewBox="0 0 16 16"><circle cx="7.6" cy="7.8" r="7.5" fill="#efefef"/><path d="M3.6 4.6L7.6 8.6L11.6 4.6M7.6 8.6V13.6" fill="none" stroke="#ee1b24" stroke-width="1.6" stroke-linecap="round" stroke-linejoin="round"/></svg>
<div class="t" style="right:1082px;top:724.22px;font-size:11.6px;line-height:14px;font-weight:normal;color:#000;word-spacing:-0.6px">15.03 20:29</div>
<svg class="i" style="left:351px;top:728.44px" width="46" height="8" viewBox="0 0 46 8"><circle cx="3.75" cy="3.8" r="3.75" fill="#ff9000"/><circle cx="12.75" cy="3.8" r="3.75" fill="#ff9000"/></svg>
<div class="t" style="right:939px;top:724.17px;font-size:11.75px;line-height:14px;font-weight:normal;color:#000;">0:17</div>
<div class="t" style="right:884.5px;top:724.08px;font-size:12px;line-height:14px;font-weight:normal;color:#000;">1</div>
<svg class="i" style="left:548px;top:722.84px" width="16" height="16" viewBox="0 0 16 16"><circle cx="8" cy="7.8" r="7.8" fill="#fc3f1d"/><path d="M10.1 3.9V11.9M10.1 4.7H8.4Q6.1 4.7 6.1 6.8Q6.1 8.8 8.4 8.8H10.1M8 8.8L6.2 11.9" fill="none" stroke="#fff" stroke-width="1.55"/></svg>
<div class="t" style="left:566.2px;top:723.88px;font-size:12px;line-height:14px;font-weight:normal;color:#1a4db9;">дверь альберо эрмитаж 2 купить в иркутске</div>
<div class="t" style="right:483.5px;top:724.08px;font-size:12px;line-height:14px;font-weight:normal;color:#000;">1</div>
<svg class="i" style="left:989px;top:723.74px" width="18" height="14" viewBox="0 0 18 14"><defs><clipPath id="c989723_7418"><rect x="0" y="0" width="18.0" height="14" rx="1.6"/></clipPath></defs><g clip-path="url(#c989723_7418)"><rect x="0" y="0" width="18.0" height="14" fill="#fff"/><rect x="0" y="4.76" width="18.0" height="4.76" fill="#1448b8"/><rect x="0" y="9.52" width="18.0" height="4.58" fill="#e8382f"/></g><path d="M0.4 5.06V1.6A1.2000000000000002 1.2000000000000002 0 0 1 1.6 0.4H16.4A1.2000000000000002 1.2000000000000002 0 0 1 17.6 1.6V5.06" fill="none" stroke="#d6d6d6" stroke-width="0.8"/></svg>
<div class="t" style="left:1011.7px;top:724.13px;font-size:11.85px;line-height:14px;font-weight:normal;color:#000;">Россия &gt; Иркутская область &gt; Иркутск</div>
<div style="position:absolute;left:1400px;top:0;width:1px;height:776px;background:#a9a9a9"></div>
<div style="position:absolute;left:1401px;top:0;width:1px;height:776px;background:#bfbfbf"></div>
</body></html>
